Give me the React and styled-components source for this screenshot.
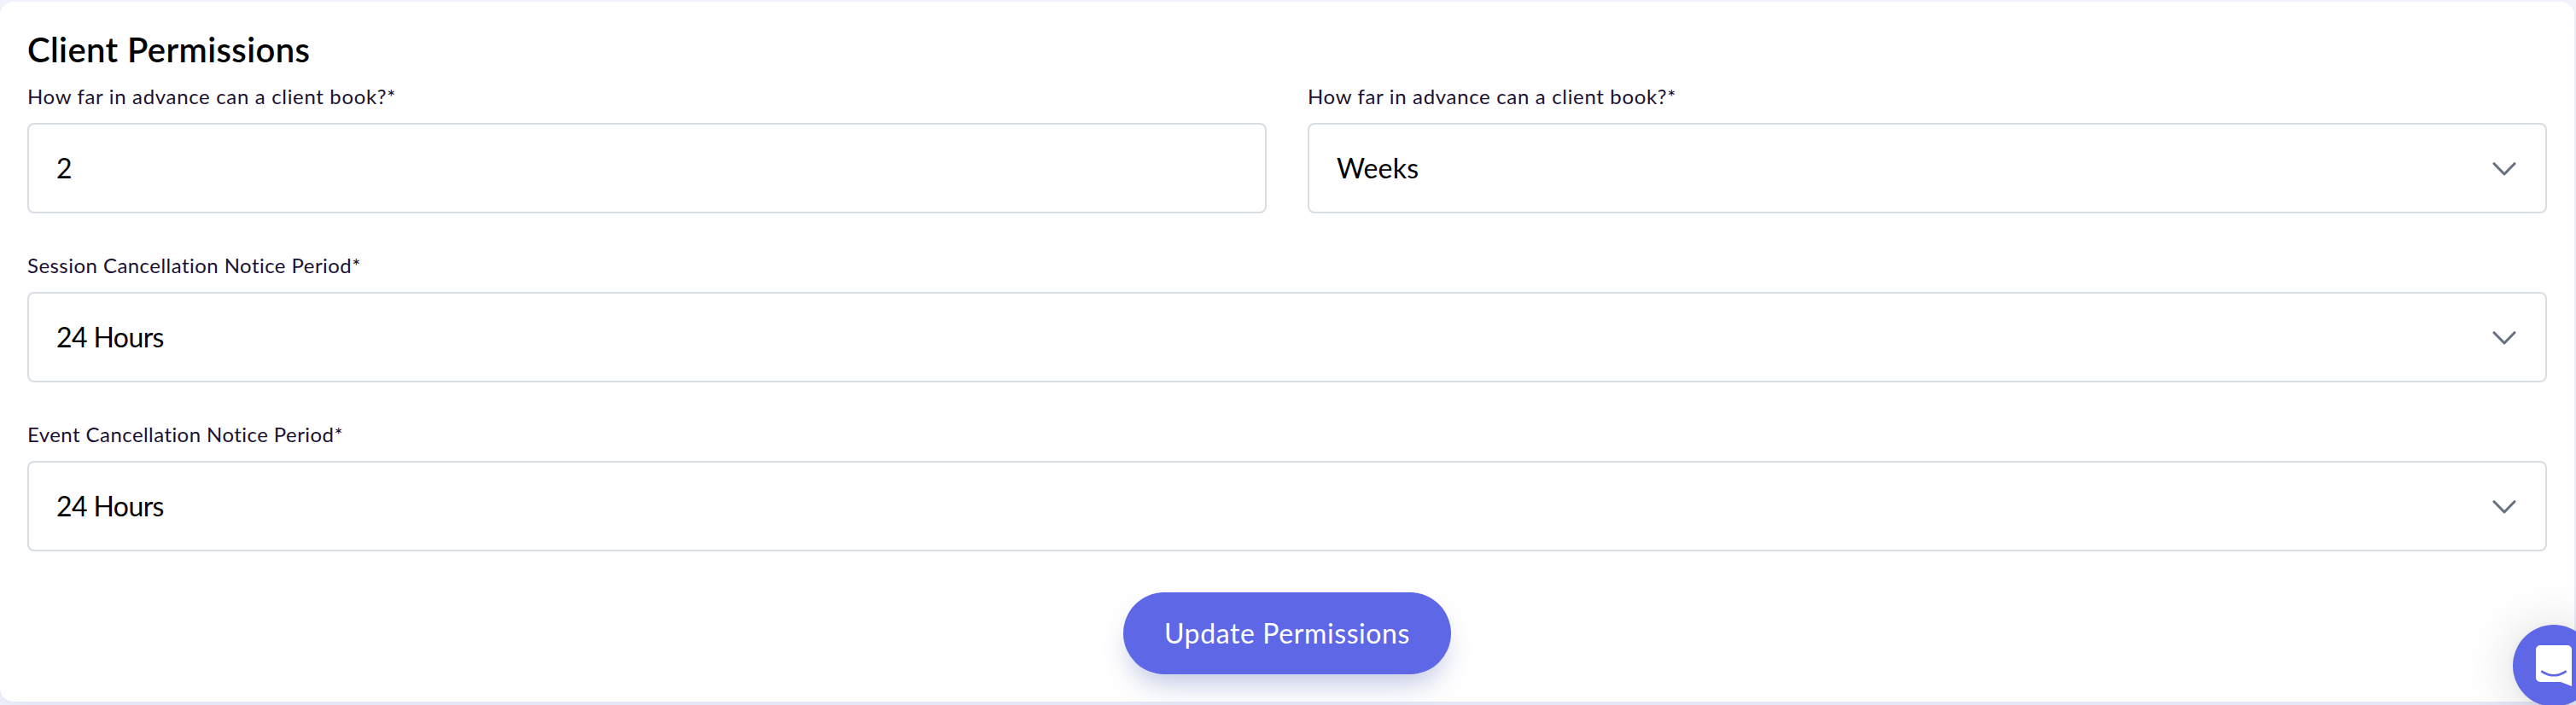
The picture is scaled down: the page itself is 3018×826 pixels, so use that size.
import styled, { createGlobalStyle } from 'styled-components';

const GlobalStyle = createGlobalStyle`
	* {
		box-sizing: border-box;
	}
	body {
		margin: 0;
		overflow: hidden;
		background: #f3f5fe;
		font-family: Lato, 'Liberation Sans', sans-serif;
	}
`;

const Page = styled.main`
	height: 826px;
	padding: 2px 2px 4px 0;
`;
const Card = styled.form`
	height: 820px;
	padding: 32px;
	border-radius: 16px;
	background: #fff;
	box-shadow: 0 8px 24px rgba(60, 80, 150, 0.11);
`;
const Title = styled.h2`
	margin: 0 0 16px;
	color: #000;
	font-size: 40px;
	font-weight: 600;
	line-height: 48px;
	letter-spacing: 0.4px;
`;
const Fields = styled.div`
	display: grid;
	grid-template-columns: 1fr 1fr;
	gap: 46px 48px;
`;
const Field = styled.div`
	grid-column: ${props => (props.$wide ? '1 / -1' : 'auto')};
`;
const Label = styled.label`
	display: block;
	margin-bottom: 16px;
	color: #1b1233;
	font-size: 24px;
	line-height: 30px;
	letter-spacing: ${props => props.$spacing}px;
`;
const Control = styled.div`
	display: flex;
	align-items: center;
	justify-content: space-between;
	height: 106px;
	padding: 0 34px 0 32px;
	border: 2px solid #d8dde4;
	border-radius: 8px;
	color: #000;
	font-size: 32px;
`;
const Value = styled.span`
	padding-bottom: 1px;
	line-height: 40px;
	letter-spacing: ${props => props.$spacing}px;
`;
const Arrow = styled.svg`
	width: 28px;
	height: 18px;
	fill: none;
	stroke: #667080;
	stroke-width: 3;
	stroke-linecap: round;
	stroke-linejoin: round;
`;
const Actions = styled.div`
	display: flex;
	justify-content: center;
	margin-top: 48px;
`;
const Button = styled.button`
	width: 384px;
	height: 96px;
	padding: 0 0 1px;
	border: 0;
	border-radius: 48px;
	background: #5e67e6;
	box-shadow: 0 18px 32px -8px rgba(64, 83, 171, 0.34);
	color: #fff;
	font-family: inherit;
	font-size: 32px;
	line-height: 40px;
	letter-spacing: 0.6px;
`;
const Launcher = styled.div`
	position: fixed;
	right: -22px;
	bottom: -2px;
	width: 96px;
	height: 96px;
	border-radius: 50%;
	background: #5e67e6;
	box-shadow: 0 2px 12px rgba(0, 0, 0, 0.06), 0 4px 64px rgba(0, 0, 0, 0.16);
	svg {
		display: block;
		width: 96px;
		height: 96px;
	}
`;

const Chevron = () => (
	<Arrow viewBox='0 0 28 18'>
		<path d='M2 3.7 14 16 26 3.7' />
	</Arrow>
);

const SelectField = ({ label, value, wide, labelSpacing, valueSpacing }) => (
	<Field $wide={wide}>
		<Label $spacing={labelSpacing}>{label}</Label>
		<Control>
			<Value $spacing={valueSpacing}>{value}</Value>
			<Chevron />
		</Control>
	</Field>
);

const App = () => {
	return (
		<>
			<GlobalStyle />
			<Page>
				<Card>
					<Title>Client Permissions</Title>
					<Fields>
						<Field>
							<Label $spacing={0.66}>How far in advance can a client book?*</Label>
							<Control>
								<Value $spacing={0}>2</Value>
							</Control>
						</Field>
						<SelectField
							label='How far in advance can a client book?*'
							value='Weeks'
							labelSpacing={0.66}
							valueSpacing={0.2}
						/>
						<SelectField
							wide
							label='Session Cancellation Notice Period*'
							value='24 Hours'
							labelSpacing={0.45}
							valueSpacing={-0.6}
						/>
						<SelectField
							wide
							label='Event Cancellation Notice Period*'
							value='24 Hours'
							labelSpacing={0.43}
							valueSpacing={-0.6}
						/>
					</Fields>
					<Actions>
						<Button type='button'>Update Permissions</Button>
					</Actions>
				</Card>
			</Page>
			<Launcher>
				<svg viewBox='0 0 96 96'>
					<path
						fill='#fff'
						d='M32 24h32a5 5 0 0 1 5 5v43l-13-5H32a5 5 0 0 1-5-5V29a5 5 0 0 1 5-5Z'
					/>
					<path
						d='M34.2 54.8q13.8 9 27.6 0'
						fill='none'
						stroke='#5e67e6'
						strokeWidth='2.6'
						strokeLinecap='round'
					/>
				</svg>
			</Launcher>
		</>
	);
};

export default App;
